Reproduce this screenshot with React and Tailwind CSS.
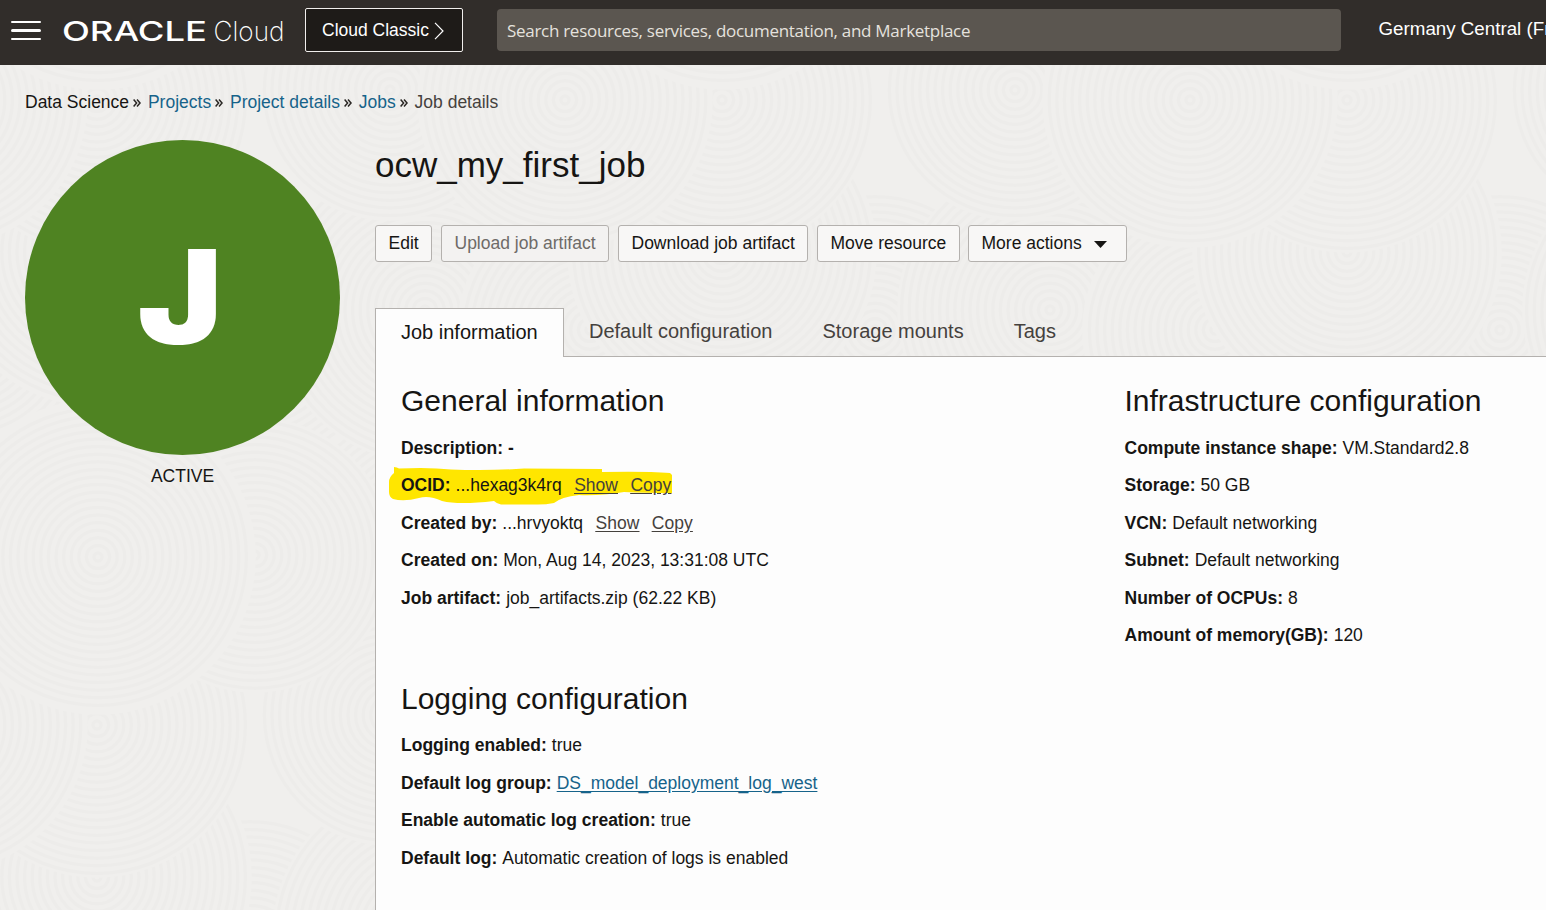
import React from "react";

const TILE = 625;

// Overlapping discs of concentric rings, painted in order.
const discs = [
  [300, 460, 150],
  [565, 520, 150],
  [410, 520, 140],
  [250, 330, 140],
  [425, 310, 150],
  [590, 330, 130],
  [97, 252, 152],
  [390, 90, 128],
  [97, 100, 150],
  [565, 100, 145],
  [255, 555, 135],
  [98, 557, 155],
];

function Rings({ cx, cy, r }) {
  const radii = [];
  for (let i = 4; i <= r; i += 7.6) radii.push(i);
  return (
    <g>
      <circle cx={cx} cy={cy} r={r + 3} fill="#f0efed" />
      {radii.map((v) => (
        <circle key={v} cx={cx} cy={cy} r={v} fill="none" stroke="#edecea" strokeWidth="3" />
      ))}
    </g>
  );
}

function Backdrop() {
  const shifts = [-TILE, 0, TILE];
  return (
    <svg className="absolute inset-0 h-full w-full" aria-hidden="true">
      <defs>
        <pattern id="rings" width={TILE} height={TILE} patternUnits="userSpaceOnUse" y="-65">
          <rect width={TILE} height={TILE} fill="#f0efed" />
          {discs.map(([x, y, r]) =>
            shifts.map((dx) =>
              shifts.map((dy) =>
                x + dx + r > -5 && x + dx - r < TILE + 5 && y + dy + r > -5 && y + dy - r < TILE + 5 ? (
                  <Rings key={`${x}-${y}-${dx}-${dy}`} cx={x + dx} cy={y + dy} r={r} />
                ) : null
              )
            )
          )}
        </pattern>
      </defs>
      <rect width="100%" height="100%" fill="url(#rings)" />
    </svg>
  );
}

function Header() {
  return (
    <header className="flex h-[65px] shrink-0 items-start overflow-hidden whitespace-nowrap bg-[#312d2a] text-white">
      <button className="ml-[11px] mt-[21px] flex w-[30px] shrink-0 flex-col gap-[6px]" aria-label="Menu">
        <span className="h-[2px] w-full rounded-full bg-white" />
        <span className="h-[3px] w-full rounded-full bg-white" />
        <span className="h-[2px] w-full rounded-full bg-white" />
      </button>
      <svg className="ml-[21px] mt-[11px] shrink-0" width="230" height="40" viewBox="0 0 230 40" fill="#fff">
        <text x="0" y="29.5" fontFamily="Inter, sans-serif" fontSize="26.5" fontWeight="500" textLength="145" lengthAdjust="spacingAndGlyphs">
          ORACLE
        </text>
        <text x="151.5" y="29.5" fontFamily="Inter, sans-serif" fontSize="27.5" fontWeight="200" textLength="71" lengthAdjust="spacingAndGlyphs">
          Cloud
        </text>
      </svg>
      <button className="ml-[13px] mt-2 flex h-11 w-[158px] shrink-0 items-center rounded-[2px] border border-[#f1efed] bg-[#1e1b18] pl-4 text-[17.5px]">
        <span>Cloud Classic</span>
        <svg className="ml-[5px] mt-0.5" width="10" height="18" viewBox="0 0 10 18" fill="none" stroke="#fff" strokeWidth="1.2">
          <path d="M1 .8 9 9 1 17.2" />
        </svg>
      </button>
      <div className="ml-[34px] mt-[9px] flex h-[42px] w-[844px] shrink-0 items-center rounded-[4px] bg-[#5b5650] pl-[10px] pt-[1.5px] font-['Open_Sans',sans-serif] text-[17px] tracking-[-0.29px] text-[#e5e2de]">
        Search resources, services, documentation, and Marketplace
      </div>
      <span className="ml-[37.5px] mt-[15px] shrink-0 text-[18.75px] leading-7">Germany Central (Frankfurt)</span>
    </header>
  );
}

function Chevrons() {
  return (
    <svg className="ml-1 mr-[6.85px] mt-0.5" width="8" height="8" viewBox="0 0 8 8" fill="none" stroke="#2a2724" strokeWidth="1.5">
      <path d="M.6.6 3.6 4 .6 7.4M4 .6 7 4 4 7.4" />
    </svg>
  );
}

function Breadcrumbs() {
  return (
    <nav className="flex h-5 items-center text-[17.5px] text-[#16638a]">
      <span className="text-[#161513]">Data Science</span>
      <Chevrons />
      <a>Projects</a>
      <Chevrons />
      <a>Project details</a>
      <Chevrons />
      <a>Jobs</a>
      <Chevrons />
      <span className="text-[#45413d]">Job details</span>
    </nav>
  );
}

function Button({ children, className = "", disabled }) {
  return (
    <button
      className={`flex h-[37px] items-center rounded-[3px] border border-[#b4b1ae] pb-px pl-[12.5px] ${
        disabled ? "bg-[#f3f2f1] text-[#6e6b68]" : "bg-[#f8f7f6] text-[#161513]"
      } ${className}`}
    >
      {children}
    </button>
  );
}

function Row({ label, children }) {
  return (
    <div className="flex h-[37.5px] items-center">
      <span className="mr-[5px] font-bold">{label}</span>
      {children}
    </div>
  );
}

function IdLinks() {
  return (
    <span className="ml-[12.5px] flex gap-[12.5px] text-[#45413d] underline underline-offset-2">
      <a>Show</a>
      <a>Copy</a>
    </span>
  );
}

function Section({ title, children, className = "pt-0", gap = "pb-[11px]" }) {
  return (
    <section className={className}>
      <div className={gap}>
        <h2 className="h-[34px] text-[30px] leading-[34px]">{title}</h2>
      </div>
      {children}
    </section>
  );
}

export default function App() {
  return (
    <div className="flex h-[910px] w-full flex-col overflow-hidden font-['Liberation_Sans',Arial,sans-serif] text-[#161513]">
      <Header />
      <div className="relative flex-1 bg-[#f0efed]">
        <Backdrop />
        <div className="relative flex h-full flex-col whitespace-nowrap pl-[25px] pt-[27px] text-[17.5px]">
          <Breadcrumbs />
          <div className="mt-[28px] flex flex-1">
            <aside className="flex w-[315px] shrink-0 flex-col items-center">
              <div className="flex h-[315px] w-[315px] items-center justify-center rounded-full bg-[#4f8322] pb-[2px] pr-[4px]">
                <span className="inline-block scale-x-[1.09] font-[Inter,sans-serif] text-[131px] font-black leading-none text-white">J</span>
              </div>
              <span className="mt-[11px] leading-5">ACTIVE</span>
            </aside>
            <main className="ml-[35px] flex min-w-0 flex-1 flex-col">
              <h1 className="mt-[5px] h-10 text-[35px] leading-10">ocw_my_first_job</h1>
              <div className="mt-[40px] flex">
                <Button className="w-[57px]">Edit</Button>
                <Button className="ml-[9px] w-[168px]" disabled>Upload job artifact</Button>
                <Button className="ml-[9px] w-[190px]">Download job artifact</Button>
                <Button className="ml-[9px] w-[143px]">Move resource</Button>
                <Button className="ml-2 w-[159px]">
                  More actions
                  <svg className="ml-3 mt-0.5" width="13" height="7" viewBox="0 0 13 7" fill="#161513">
                    <path d="M0 0h13L6.5 7z" />
                  </svg>
                </Button>
              </div>
              <div className="mt-[46px] flex h-[49px] text-[20px] text-[#45413d]">
                <div className="flex w-[189px] items-center border border-b-0 border-[#b4b1ae] bg-[#fdfdfd] pb-[2px] pl-[25px] text-[#161513]">
                  Job information
                </div>
                <div className="flex flex-1 items-center gap-[50px] border-b border-[#b4b1ae] pb-[3px] pl-[25px]">
                  <span>Default configuration</span>
                  <span>Storage mounts</span>
                  <span>Tags</span>
                </div>
              </div>
              <div className="flex flex-1 border-l border-[#b4b1ae] bg-[#fdfdfd] pl-[25px] pt-[27px]">
                <div className="w-[723.5px] shrink-0">
                  <Section title="General information">
                    <Row label="Description:"><b>-</b></Row>
                    <div className="relative">
                      <svg className="absolute -left-[12px] top-0" width="284" height="40" viewBox="0 0 284 40" fill="#ffe600">
                        <path d="M5 0Q8 0 10 1.5Q40 0 62 2.5Q100 4 135 1.5L213 2V5Q255 4 281 6L283 8V26Q255 26 235 25Q210 29 190 28Q172 30 165 36Q155 38 145 37.500H112Q107 36 105 34Q70 38 53 34Q40 28 30 31Q15 35 4 32Q0 30 0 25V15Q0 10 5 6Z" />
                      </svg>
                      <div className="relative">
                        <Row label="OCID:">...hexag3k4rq<IdLinks /></Row>
                      </div>
                    </div>
                    <Row label="Created by:">...hrvyoktq<IdLinks /></Row>
                    <Row label="Created on:">Mon, Aug 14, 2023, 13:31:08 UTC</Row>
                    <Row label="Job artifact:">job_artifacts.zip (62.22 KB)</Row>
                  </Section>
                  <Section title="Logging configuration" className="pt-[65.5px]" gap="pb-[10.5px]">
                    <Row label="Logging enabled:">true</Row>
                    <Row label="Default log group:">
                      <a className="text-[#16638a] underline underline-offset-2">DS_model_deployment_log_west</a>
                    </Row>
                    <Row label="Enable automatic log creation:">true</Row>
                    <Row label="Default log:">Automatic creation of logs is enabled</Row>
                  </Section>
                </div>
                <Section title="Infrastructure configuration">
                  <Row label="Compute instance shape:">VM.Standard2.8</Row>
                  <Row label="Storage:">50 GB</Row>
                  <Row label="VCN:">Default networking</Row>
                  <Row label="Subnet:">Default networking</Row>
                  <Row label="Number of OCPUs:">8</Row>
                  <Row label="Amount of memory(GB):">120</Row>
                </Section>
              </div>
            </main>
          </div>
        </div>
      </div>
    </div>
  );
}
